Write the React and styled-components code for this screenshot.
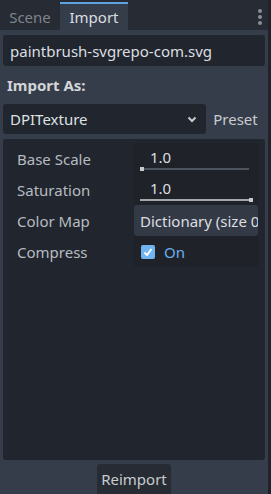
import React from 'react';
import styled, { createGlobalStyle } from 'styled-components';

const GlobalStyle = createGlobalStyle`
  html, body {
    margin: 0;
    padding: 0;
    background: #363d4a;
  }
  body {
    font-family: 'Noto Sans', 'DejaVu Sans', sans-serif;
    font-size: 15px;
    color: #dfe0e2;
  }
`;

const Dock = styled.div`
  display: flex;
  width: 271px;
  height: 494px;
  overflow: hidden;
`;

const Main = styled.div`
  display: flex;
  flex-direction: column;
  width: 268px;
  background: #363d4a;
`;

const Edge = styled.div`
  width: 3px;
  background: #1f242b;
`;

const TabBar = styled.div`
  display: flex;
  align-items: stretch;
  height: 30px;
  background: #262b34;
  position: relative;
`;

const Tab = styled.div`
  display: flex;
  align-items: center;
  justify-content: center;
  width: ${p => p.$w}px;
  margin-top: 2px;
  padding-bottom: 1px;
  box-sizing: border-box;
  color: ${p => (p.$active ? '#dcdee1' : '#7f848c')};
  background: ${p => (p.$active ? '#363d4a' : 'transparent')};
  border-top: 2px solid ${p => (p.$active ? '#5ea3e0' : 'transparent')};
`;

const Kebab = styled.div`
  position: absolute;
  right: 6px;
  top: 9px;
  display: flex;
  flex-direction: column;
  gap: 2px;

  span {
    width: 4px;
    height: 4px;
    border-radius: 50%;
    background: #8a8f97;
  }
`;

const Body = styled.div`
  display: flex;
  flex-direction: column;
  flex: 1;
  padding: 5px 3px 0;
`;

const Field = styled.div`
  display: flex;
  align-items: center;
  height: 31px;
  padding: 0 7px;
  background: #21262e;
  border-radius: 3px;
  color: #dcdee1;
`;

const SectionLabel = styled.div`
  display: flex;
  align-items: center;
  height: 38px;
  padding-left: 4px;
  font-weight: bold;
  color: #d3d5d8;
`;

const PresetRow = styled.div`
  display: flex;
  align-items: center;
  height: 30px;
`;

const Select = styled.div`
  display: flex;
  align-items: center;
  justify-content: space-between;
  width: 203px;
  height: 30px;
  box-sizing: border-box;
  padding: 0 9px 0 7px;
  background: #21262e;
  border-radius: 3px;
`;

const PresetButton = styled.div`
  flex: 1;
  text-align: center;
  color: #c9cbcf;
`;

const Inspector = styled.div`
  display: flex;
  flex-direction: column;
  margin-top: 5px;
  height: 321px;
  padding: 4px 7px 0 0;
  box-sizing: border-box;
  background: #21262e;
  border-radius: 3px;
`;

const Row = styled.div`
  display: grid;
  grid-template-columns: 131px 1fr;
  height: 31px;
`;

const Label = styled.div`
  display: flex;
  align-items: center;
  padding-left: 14px;
  color: #b7bbc1;
`;

const Value = styled.div`
  position: relative;
  display: flex;
  align-items: center;
  padding-left: ${p => p.$pad ?? 7}px;
  background: #1f2329;
  overflow: hidden;
  white-space: nowrap;
`;

const Number = styled.div`
  position: absolute;
  left: 16px;
  top: 4px;
  color: #dcdee1;
`;

const Track = styled.div`
  position: absolute;
  left: 6px;
  width: ${p => p.$w}px;
  bottom: 4px;
  height: 2px;
  background: ${p => (p.$full ? '#a4a7ab' : '#4d535c')};
`;

const Grabber = styled.div`
  position: absolute;
  bottom: 3px;
  left: ${p => p.$x}px;
  width: 4px;
  height: 4px;
  background: #c7c9cc;
`;

const DictButton = styled.div`
  display: flex;
  align-items: center;
  width: 100%;
  height: 100%;
  padding-left: 6px;
  background: #343a45;
  border-radius: 3px;
  overflow: hidden;
  color: #dcdee1;
`;

const CheckBox = styled.div`
  display: flex;
  align-items: center;
  justify-content: center;
  width: 14px;
  height: 14px;
  border-radius: 2px;
  background: #70b4f0;
`;

const OnText = styled.span`
  margin-left: 9px;
  color: #6aaef0;
`;

const Footer = styled.div`
  display: flex;
  justify-content: center;
  padding-top: 4px;
`;

const ReimportButton = styled.div`
  display: flex;
  align-items: center;
  justify-content: center;
  width: 74px;
  height: 30px;
  background: #262b34;
  border-radius: 3px 3px 0 0;
  color: #c9cbcf;
`;

const Chevron = () => (
  <svg width="10" height="7" viewBox="0 0 10 7">
    <path d="M1.5 1.5 L5 5 L8.5 1.5" stroke="#c9cbcf" strokeWidth="2" fill="none" />
  </svg>
);

const Check = () => (
  <svg width="10" height="10" viewBox="0 0 10 10">
    <path d="M1.5 5.5 L4 8 L8.5 2" stroke="#ffffff" strokeWidth="2" fill="none" />
  </svg>
);

const App = () => (
  <>
    <GlobalStyle />
    <Dock>
      <Main>
        <TabBar>
          <Tab $w={60}>Scene</Tab>
          <Tab $w={68} $active>Import</Tab>
          <Kebab>
            <span />
            <span />
            <span />
          </Kebab>
        </TabBar>
        <Body>
          <Field>paintbrush-svgrepo-com.svg</Field>
          <SectionLabel>Import As:</SectionLabel>
          <PresetRow>
            <Select>
              DPITexture
              <Chevron />
            </Select>
            <PresetButton>Preset</PresetButton>
          </PresetRow>
          <Inspector>
            <Row>
              <Label>Base Scale</Label>
              <Value>
                <Number>1.0</Number>
                <Track $w={109} />
                <Grabber $x={6} />
              </Value>
            </Row>
            <Row>
              <Label>Saturation</Label>
              <Value>
                <Number>1.0</Number>
                <Track $w={112} $full />
                <Grabber $x={115} />
              </Value>
            </Row>
            <Row>
              <Label>Color Map</Label>
              <Value $pad={0}>
                <DictButton>Dictionary (size 0)</DictButton>
              </Value>
            </Row>
            <Row>
              <Label>Compress</Label>
              <Value>
                <CheckBox>
                  <Check />
                </CheckBox>
                <OnText>On</OnText>
              </Value>
            </Row>
          </Inspector>
          <Footer>
            <ReimportButton>Reimport</ReimportButton>
          </Footer>
        </Body>
      </Main>
      <Edge />
    </Dock>
  </>
);

export default App;
